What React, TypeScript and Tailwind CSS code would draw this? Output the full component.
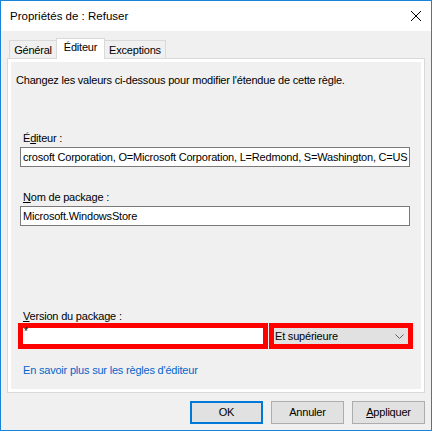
export default function App() {
  return (
    <div className="w-[432px] h-[431px] border border-[#1883d7] bg-[#f0f0f0] flex flex-col text-[11px] leading-[13px] tracking-[-0.2px] text-black overflow-hidden font-['Liberation_Sans',Arial,sans-serif]">
      {/* Title bar */}
      <div className="h-[30px] shrink-0 bg-white flex items-center pl-[9px]">
        <span className="text-[11.5px] tracking-normal">Propriétés de : Refuser</span>
        <svg className="ml-auto mr-[10px]" width="10" height="10" viewBox="0 0 10 10">
          <path d="M0 0 L10 10 M10 0 L0 10" stroke="#000" strokeWidth="1" fill="none" />
        </svg>
      </div>

      {/* Body */}
      <div className="flex-1 flex flex-col px-[6px] pt-[7px]">
        {/* Tabs */}
        <div className="h-[20px] flex items-end pl-[2px] relative z-10">
          <div className="h-[18px] w-[48px] border border-b-0 border-[#d9d9d9] bg-[#f0f0f0] flex justify-center pt-[3px]">
            Général
          </div>
          <div className="h-[21px] -mb-px -ml-px w-[49px] border border-b-0 border-[#d9d9d9] bg-white flex justify-center pt-[2px]">
            Éditeur
          </div>
          <div className="h-[18px] w-[62px] -ml-px border border-b-0 border-[#d9d9d9] bg-[#f0f0f0] flex justify-center pt-[3px]">
            Exceptions
          </div>
        </div>

        {/* Panel */}
        <div className="h-[335px] border border-[#d9d9d9] bg-white p-[3px] flex">
          <div className="flex-1 bg-[#f0f0f0] flex flex-col">
            <p className="mt-[12px] ml-[5px]">
              Changez les valeurs ci-dessous pour modifier l'étendue de cette règle.
            </p>

            <div className="mt-[45px] ml-[12px]">
              É<span className="underline">d</span>iteur :
            </div>
            <div className="mt-[2px] ml-[9px] w-[390px] h-[20px] border border-[#7a7a7a] bg-white px-[2px] flex items-center overflow-hidden whitespace-nowrap">
              crosoft Corporation, O=Microsoft Corporation, L=Redmond, S=Washington, C=US
            </div>

            <div className="mt-[24px] ml-[12px]">
              <span className="underline">N</span>om de package :
            </div>
            <div className="mt-[2px] ml-[9px] w-[390px] h-[20px] border border-[#7a7a7a] bg-white px-[2px] flex items-center overflow-hidden whitespace-nowrap">
              Microsoft.WindowsStore
            </div>

            <div className="mt-[84px] ml-[12px]">
              <span className="underline">V</span>ersion du package :
            </div>
            <div className="ml-[7px] flex">
              <div className="w-[250px] h-[26px] border-[5px] border-[#ff0000] bg-white pl-[1px] text-[10px] leading-[8px]">
                *
              </div>
              <div className="ml-[1px] w-[144px] h-[26px] border-[5px] border-[#ff0000] bg-[#e1e1e1] flex items-center pl-[1px] pr-[4px]">
                <span>Et supérieure</span>
                <svg className="ml-auto" width="9" height="5" viewBox="0 0 9 5">
                  <path d="M0.5 0.5 L4.5 4.5 L8.5 0.5" stroke="#606060" strokeWidth="1" fill="none" />
                </svg>
              </div>
            </div>

            <div className="mt-[15px] ml-[12px] text-[#0066cc]">
              En savoir plus sur les règles d'éditeur
            </div>
          </div>
        </div>

        {/* Buttons */}
        <div className="mt-[8px] flex justify-end gap-[8px]">
          <button className="w-[73px] h-[23px] border-2 border-[#0078d7] bg-[#e1e1e1] flex items-center justify-center">
            OK
          </button>
          <button className="w-[73px] h-[23px] border border-[#adadad] bg-[#e1e1e1] flex items-center justify-center">
            Annuler
          </button>
          <button className="w-[73px] h-[23px] border border-[#adadad] bg-[#e1e1e1] flex items-center justify-center">
            <span><span className="underline">A</span>ppliquer</span>
          </button>
        </div>
      </div>
    </div>
  );
}
